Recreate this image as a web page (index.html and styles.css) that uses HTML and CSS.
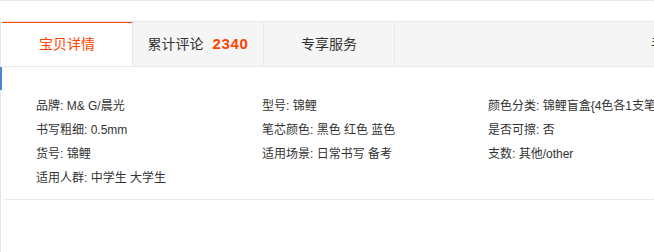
FILE: index.html
```html
<!DOCTYPE html>
<html lang="zh-CN">
<head>
    <meta charset="UTF-8">
    <meta name="viewport" content="width=device-width, initial-scale=1.0">
    <title>宝贝详情</title>
    <link rel="stylesheet" href="styles.css">
</head>
<body>
    <div class="top-line"></div>
    <div class="side-mark"></div>

    <div class="detail">
        <ul class="tab-bar">
            <li class="tab active">宝贝详情</li>
            <li class="tab">累计评论<em class="count">2340</em></li>
            <li class="tab">专享服务</li>
            <li class="tab-rest">手机购买</li>
        </ul>

        <div class="attributes">
            <ul class="attr-list">
                <li>品牌: M&amp; G/晨光</li>
                <li>型号: 锦鲤</li>
                <li>颜色分类: 锦鲤盲盒{4色各1支笔芯}</li>
                <li>书写粗细: 0.5mm</li>
                <li>笔芯颜色: 黑色 红色 蓝色</li>
                <li>是否可擦: 否</li>
                <li>货号: 锦鲤</li>
                <li>适用场景: 日常书写 备考</li>
                <li>支数: 其他/other</li>
                <li>适用人群: 中学生 大学生</li>
            </ul>
        </div>
    </div>
</body>
</html>
```

FILE: styles.css
```css
html, body {
    height: 100%;
}
body {
    margin: 0;
    overflow: hidden;
    font-family: "Liberation Sans", "Noto Sans CJK SC", sans-serif;
    font-size: 12px;
    color: #333;
    background-color: #fff;
}
ul {
    list-style: none;
    margin: 0;
    padding: 0;
}
.top-line {
    height: 1px;
    background-color: #e8e8e8;
}
.side-mark {
    position: absolute;
    left: 0;
    top: 67px;
    width: 2px;
    height: 23px;
    background-color: #4a86d4;
}
.detail {
    margin-top: 20px;
    height: calc(100% - 21px);
    border-left: 1px solid #e6e6e6;
    overflow: hidden;
}
.tab-bar {
    display: flex;
    height: 44px;
    margin-left: 1px;
    background-color: #f5f5f5;
    border-top: 1px solid #e8e8e8;
    border-bottom: 1px solid #e8e8e8;
    overflow: hidden;
}
.tab {
    flex: none;
    width: 130px;
    border-right: 1px solid #e8e8e8;
    text-align: center;
    line-height: 44px;
    font-size: 14px;
    color: #333;
}
.tab.active {
    height: 44px;
    margin-top: -1px;
    margin-bottom: -1px;
    border-top: 2px solid #ff4400;
    line-height: 43px;
    background-color: #fff;
    color: #ff4400;
}
.count {
    margin-left: 9px;
    font-style: normal;
    font-weight: bold;
    font-size: 15px;
    letter-spacing: 0.6px;
    color: #ff4400;
}
.tab-rest {
    flex: 1;
    padding-left: 256px;
    line-height: 44px;
    font-size: 14px;
    white-space: nowrap;
    overflow: hidden;
}
.attributes {
    margin-left: 4px;
    margin-top: 27px;
    padding-bottom: 9px;
    border-bottom: 1px solid #e8e8e8;
}
.attr-list {
    display: grid;
    grid-template-columns: repeat(3, 226px);
    padding-left: 31px;
}
.attr-list li {
    line-height: 24px;
    white-space: nowrap;
    overflow: hidden;
}
```
